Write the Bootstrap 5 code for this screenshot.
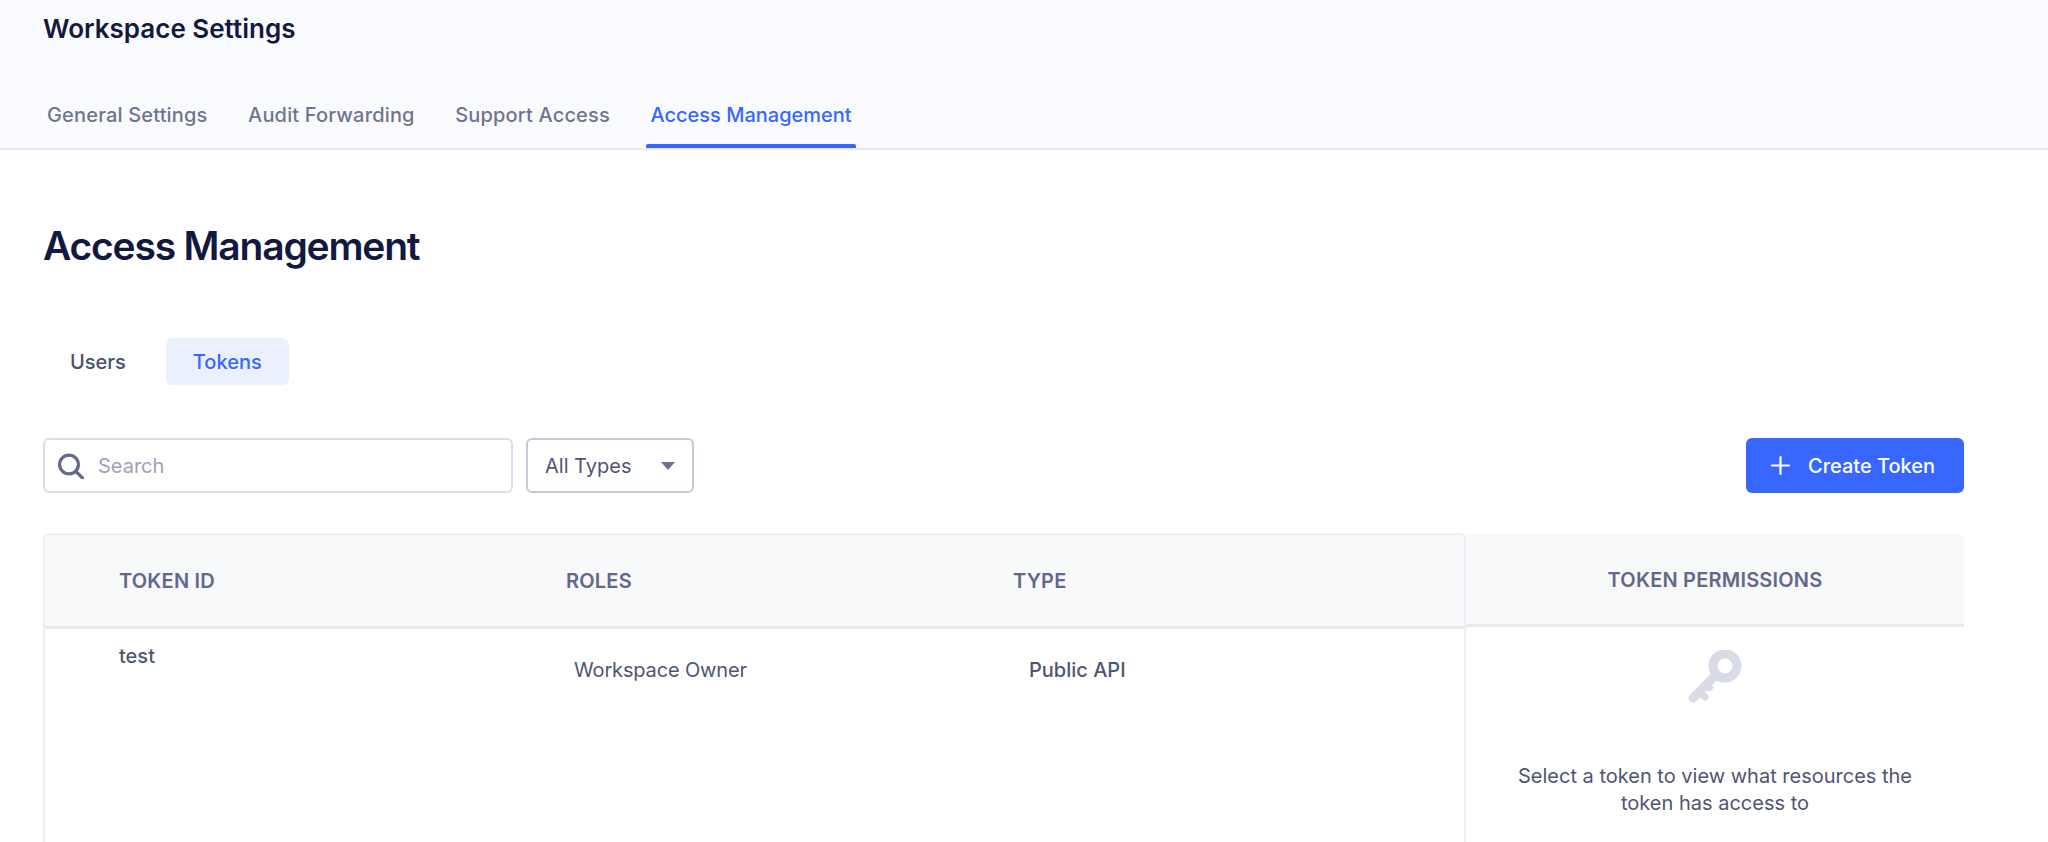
<!DOCTYPE html>
<html lang="en">
<head>
<meta charset="utf-8">
<title>Workspace Settings</title>
<link rel="stylesheet" href="https://cdn.jsdelivr.net/npm/bootstrap@5.3.0/dist/css/bootstrap.min.css">
<style>
html, body { height: 842px; overflow: hidden; }
body { font-family: Inter, "Liberation Sans", sans-serif; color: #4f5573; background: #fff; }
.top-band { background: #fafbff; border-bottom: 2px solid #e8e9f2; height: 150px; padding: 0 43px; }
.band-title { font-size: 26px; font-weight: 600; color: #12183f; line-height: 31px; padding-top: 13px; margin: 0; height: 78px; }
.band-tabs { gap: 40.5px; margin-left: 4px; }
.band-tab { font-size: 20px; line-height: 24px; font-weight: 500; letter-spacing: .17px; color: #6f7491; text-decoration: none; padding: 25px 0 21px; position: relative; }
.band-tab.is-on { color: #3767ff; letter-spacing: 0; }
.band-tab.is-on::after { content: ""; position: absolute; left: -4px; right: -4px; bottom: 0; height: 4px; background: #3767ff; border-radius: 2px 2px 0 0; }
.page-body { padding: 0 0 0 43px; width: 1964px; }
.page-h { font-size: 39px; font-weight: 600; letter-spacing: -1.2px; color: #12183f; line-height: 48px; margin: 72px 0 0; }
.pill-row { margin-top: 68px; }
.sub-pill { font-size: 20px; line-height: 24px; font-weight: 500; color: #4a4f6c; padding: 12px 27px 11px; height: 47px; border-radius: 6px; text-decoration: none; }
.sub-pill.is-on { background: #eaf0fd; color: #3767ff; margin-left: 13px; }
.tool-row { margin-top: 53px; height: 55px; }
.search-box { width: 470px; height: 55px; border: 2px solid #dcdde8; border-radius: 6px; padding-left: 13px; gap: 14px; background: #fff; }
.search-text { font-size: 20px; color: #9ea2bc; }
.type-box { width: 168px; height: 55px; border: 2px solid #c7c9da; border-radius: 6px; margin-left: 13px; padding: 0 17px; font-size: 20px; color: #4f5573; background: #fff; }
.type-caret { width: 0; height: 0; border-left: 7px solid transparent; border-right: 7px solid transparent; border-top: 8px solid #6d7290; }
.make-btn { width: 218px; height: 55px; padding: 0 0 0 24px; background: #3767ff; color: #fff; border: 0; border-radius: 6px; font-size: 20px; font-weight: 500; gap: 17px; }
.make-btn:hover { background: #3767ff; color: #fff; }
.grid-wrap { margin-top: 40px; height: 310px; }
.main-pane { width: 1423px; flex: none; border: 2px solid #eeeff5; border-bottom: 0; border-radius: 6px 6px 0 0; }
.side-pane { flex: 1 1 0; }
.pane-head { height: 94px; background: #f8f9fb; border-bottom: 3px solid #e8eaf1; font-size: 20px; font-weight: 600; color: #63688a; line-height: 24px; letter-spacing: .2px; }
.main-pane .pane-head { border-radius: 4px 4px 0 0; }
.side-pane .pane-head { border-radius: 0 6px 0 0; padding-top: 2px; }
.col-a { width: 521px; padding-left: 74px; flex: none; }
.col-b { width: 447px; flex: none; }
.row-cell { font-size: 20px; line-height: 24px; color: #4f5573; }
.token-name { font-weight: 500; padding: 15px 0 0 74px; width: 521px; flex: none; }
.role-name { padding: 29px 0 0 8px; width: 447px; flex: none; letter-spacing: -.15px; }
.api-name { font-weight: 500; padding: 29px 0 0 16px; }
.side-body { text-align: center; font-size: 20px; line-height: 27px; color: #4f5573; }
.key-art { display: block; margin: 23px auto 0; }
.side-msg { margin: 57px auto 0; width: 420px; }
</style>
</head>
<body>
<header class="top-band">
  <h2 class="band-title">Workspace Settings</h2>
  <nav class="d-flex band-tabs">
    <a class="band-tab" href="#">General Settings</a>
    <a class="band-tab" href="#">Audit Forwarding</a>
    <a class="band-tab" href="#">Support Access</a>
    <a class="band-tab is-on" href="#">Access Management</a>
  </nav>
</header>
<main class="page-body">
  <h1 class="page-h">Access Management</h1>
  <div class="d-flex pill-row">
    <a class="sub-pill" href="#">Users</a>
    <a class="sub-pill is-on" href="#">Tokens</a>
  </div>
  <div class="d-flex align-items-center tool-row">
    <div class="d-flex align-items-center search-box">
      <svg width="26" height="26" viewBox="0 0 26 26" fill="none" stroke="#646a88" stroke-width="3.2" stroke-linecap="round"><circle cx="11" cy="11.500" r="9.400"/><path d="M18 18.500 24.500 25"/></svg>
      <span class="search-text">Search</span>
    </div>
    <div class="d-flex align-items-center justify-content-between type-box">
      <span>All Types</span><span class="type-caret"></span>
    </div>
    <button class="btn d-flex align-items-center make-btn ms-auto" type="button">
      <svg width="21" height="21" viewBox="0 0 21 21" stroke="#fff" stroke-width="2.200" stroke-linecap="round"><path d="M10.500 2v17M2 10.500h17"/></svg>
      <span>Create Token</span>
    </button>
  </div>
  <div class="d-flex grid-wrap">
    <section class="main-pane">
      <div class="d-flex align-items-center pane-head">
        <div class="col-a">TOKEN ID</div>
        <div class="col-b">ROLES</div>
        <div>TYPE</div>
      </div>
      <div class="d-flex row-cell">
        <div class="token-name">test</div>
        <div class="role-name">Workspace Owner</div>
        <div class="api-name">Public API</div>
      </div>
    </section>
    <section class="side-pane">
      <div class="d-flex align-items-center justify-content-center pane-head">TOKEN PERMISSIONS</div>
      <div class="side-body">
        <svg class="key-art" width="56" height="56" viewBox="0 0 56 56" fill="none" stroke="#d9dbe7" stroke-linecap="round"><circle cx="38" cy="16" r="12" stroke-width="9"/><path d="M29 25 6 48" stroke-width="9"/><path d="M13 42l5 5M20 35l2.500 2.500" stroke-width="7"/></svg>
        <p class="side-msg">Select a token to view what resources the token has access to</p>
      </div>
    </section>
  </div>
</main>
</body>
</html>
